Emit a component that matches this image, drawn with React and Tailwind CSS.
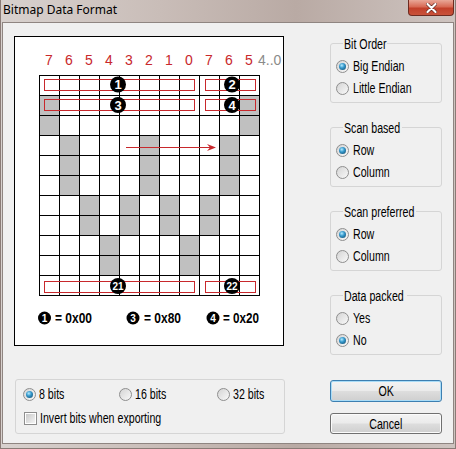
import React from 'react';

const GRAY = [
  [1, 0], [1, 10], [2, 0], [2, 10],
  [3, 1], [3, 5], [3, 9], [4, 1], [4, 5], [4, 9], [5, 1], [5, 5], [5, 9],
  [6, 2], [6, 4], [6, 6], [6, 8], [7, 2], [7, 4], [7, 6], [7, 8],
  [8, 3], [8, 7], [9, 3], [9, 7],
];
const BITS = [7, 6, 5, 4, 3, 2, 1, 0, 7, 6, 5];
const RED = '#c8282c';

// narrow dialog text (the shot uses a condensed ui font)
const Txt = ({ children }) => (
  <span className="inline-block origin-left scale-x-[0.76] whitespace-nowrap text-[14px] leading-[16px] text-black">
    {children}
  </span>
);

const Radio = ({ checked }) => (
  <span className="flex h-[13px] w-[13px] shrink-0 items-center justify-center rounded-full border border-[#8e8e8e] bg-[linear-gradient(135deg,#d4d4d4,#f9f9f9)]">
    {checked && (
      <span className="h-[7px] w-[7px] rounded-full bg-[radial-gradient(circle_at_40%_35%,#b5ecff_0%,#3598cc_40%,#0f4463_100%)]" />
    )}
  </span>
);

const RadioRow = ({ label, checked }) => (
  <div className="flex h-[22px] items-center gap-[4px]">
    <Radio checked={checked} />
    <Txt>{label}</Txt>
  </div>
);

const Group = ({ title, legendW, className, children }) => (
  <fieldset className={'rounded-[3px] border border-[#d5d5d5] pb-[3px] pl-[5px] pt-[5px] ' + className}>
    <legend className={'ml-[7px] h-[14px] px-[1px] leading-[14px] ' + legendW}>
      <Txt>{title}</Txt>
    </legend>
    {children}
  </fieldset>
);

const Circle = ({ cx, cy, r, n, size }) => (
  <g>
    <circle cx={cx} cy={cy} r={r} fill="#000" />
    <text x={cx} y={cy + size * 0.36} textAnchor="middle" fill="#fff" fontWeight="bold" fontSize={size}>
      {n}
    </text>
  </g>
);

function Picture() {
  const lines = [];
  for (let i = 0; i <= 11; i++) {
    lines.push(<line key={'v' + i} x1={24.5 + 20 * i} y1={38} x2={24.5 + 20 * i} y2={259} stroke="#000" />);
    lines.push(<line key={'h' + i} x1={24} y1={38.5 + 20 * i} x2={245} y2={38.5 + 20 * i} stroke="#000" />);
  }
  return (
    <svg width="268" height="308" className="block font-['Liberation_Sans',Arial,sans-serif]">
      {BITS.map((b, i) => (
        <text key={i} x={34 + 20 * i} y={28} textAnchor="middle" fontSize="14" fill={RED}>
          {b}
        </text>
      ))}
      <text x={243} y={28} fontSize="14" fill="#8a8a8a">4..0</text>

      {GRAY.map(([r, c]) => (
        <rect key={r + '-' + c} x={24 + 20 * c} y={38 + 20 * r} width="20" height="20" fill="#c0c0c0" />
      ))}
      <g shapeRendering="crispEdges">{lines}</g>

      <g fill="none" stroke={RED} shapeRendering="crispEdges">
        <rect x="29.5" y="42.5" width="150" height="11" />
        <rect x="190.5" y="42.5" width="50" height="11" />
        <rect x="29.5" y="62.5" width="150" height="11" />
        <rect x="190.5" y="62.5" width="50" height="11" />
        <rect x="29.5" y="244.5" width="150" height="11" />
        <rect x="190.5" y="244.5" width="50" height="11" />
      </g>

      <line x1="111" y1="110.5" x2="198" y2="110.5" stroke={RED} />
      <polygon points="201,110.5 192,107 195,110.5 192,114" fill={RED} />

      <Circle cx={103} cy={47.5} r={8} n="1" size={13} />
      <Circle cx={217} cy={47.5} r={8} n="2" size={13} />
      <Circle cx={103} cy={68} r={8} n="3" size={13} />
      <Circle cx={217} cy={68} r={8} n="4" size={13} />
      <Circle cx={103} cy={249} r={8} n="21" size={10} />
      <Circle cx={217} cy={249} r={8} n="22" size={10} />

      <Circle cx={29.5} cy={281} r={6.5} n="1" size={10} />
      <text x="40" y="286" fontSize="14" fontWeight="bold" textLength="37" lengthAdjust="spacingAndGlyphs">= 0x00</text>
      <Circle cx={118} cy={281} r={6.5} n="3" size={10} />
      <text x="129" y="286" fontSize="14" fontWeight="bold" textLength="37" lengthAdjust="spacingAndGlyphs">= 0x80</text>
      <Circle cx={198} cy={281} r={6.5} n="4" size={10} />
      <text x="208" y="286" fontSize="14" fontWeight="bold" textLength="36" lengthAdjust="spacingAndGlyphs">= 0x20</text>
    </svg>
  );
}

const Button = ({ label, primary, className }) => (
  <div
    className={
      'flex items-center justify-center rounded-[3px] border bg-[linear-gradient(#f3f3f3_0%,#ebebeb_48%,#dddddd_52%,#cfcfcf_100%)] ' +
      (primary ? 'border-[#3c7fb1] shadow-[inset_0_0_0_1px_#a9dcf7] ' : 'border-[#707070] shadow-[inset_0_0_0_1px_#fbfbfb] ') +
      className
    }
  >
    <span className="inline-block origin-center scale-x-[0.76] whitespace-nowrap text-[14px] leading-[16px] text-black">{label}</span>
  </div>
);

export default function App() {
  return (
    <div className="h-[449px] w-[456px] overflow-hidden border-x border-b border-[#8a7b76] bg-[linear-gradient(90deg,#d8d1ce_0%,#c9bdb8_35%,#b9aaa4_65%,#cec4c0_100%)] font-['Liberation_Sans',Arial,sans-serif]">
      <div className="flex h-[22px] items-start">
        <div className="pl-[2px] pt-[2px] font-['Noto_Sans',sans-serif] text-[12px] leading-[16px] text-black">Bitmap Data Format</div>
        <div className="ml-auto mr-[1px] flex h-[16px] w-[46px] items-center justify-center rounded-b-[4px] border border-t-0 border-[#6e2b20] bg-[linear-gradient(#e9a797_0%,#d86a55_45%,#c2402a_55%,#c9523a_100%)]">
          <svg width="11" height="10" viewBox="0 0 11 10">
            <path d="M1.5 1 L9.5 9 M9.5 1 L1.5 9" stroke="#5a2018" strokeWidth="3.4" strokeLinecap="round" />
            <path d="M1.5 1 L9.5 9 M9.5 1 L1.5 9" stroke="#fff" strokeWidth="2.2" strokeLinecap="round" />
          </svg>
        </div>
      </div>

      <div className="ml-[1px] flex h-[422px] w-[452px] border border-[#8f8581] bg-[#f0f0f0] pl-[11px] pt-[13px]">
        <div className="flex w-[271px] flex-col">
          <div className="h-[310px] w-[270px] border border-black bg-white">
            <Picture />
          </div>
          <div className="ml-[1px] mt-[33px] h-[55px] w-[270px] rounded-[3px] border border-[#d5d5d5] pt-[4px]">
            <div className="flex h-[20px] items-center pl-[7px]">
              <div className="flex w-[96px] items-center gap-[3px]">
                <Radio checked />
                <Txt>8 bits</Txt>
              </div>
              <div className="flex w-[98px] items-center gap-[3px]">
                <Radio />
                <Txt>16 bits</Txt>
              </div>
              <div className="flex items-center gap-[3px]">
                <Radio />
                <Txt>32 bits</Txt>
              </div>
            </div>
            <div className="mt-[4px] flex h-[20px] items-center gap-[3px] pl-[8px]">
              <span className="flex h-[13px] w-[13px] items-center justify-center border border-[#8e8e8e] bg-white">
                <span className="h-[9px] w-[9px] bg-[linear-gradient(135deg,#c9c9c9,#f4f4f4)]" />
              </span>
              <Txt>Invert bits when exporting</Txt>
            </div>
          </div>
        </div>

        <div className="ml-[45px] flex w-[112px] flex-col">
          <Group title="Bit Order" legendW="w-[44px]" className="">
            <RadioRow label="Big Endian" checked />
            <RadioRow label="Little Endian" />
          </Group>
          <Group title="Scan based" legendW="w-[59px]" className="mt-[17px]">
            <RadioRow label="Row" checked />
            <RadioRow label="Column" />
          </Group>
          <Group title="Scan preferred" legendW="w-[73px]" className="mt-[17px]">
            <RadioRow label="Row" checked />
            <RadioRow label="Column" />
          </Group>
          <Group title="Data packed" legendW="w-[64px]" className="mt-[17px]">
            <RadioRow label="Yes" />
            <RadioRow label="No" checked />
          </Group>
          <Button label="OK" primary className="mt-[25px] h-[22px]" />
          <Button label="Cancel" className="mt-[11px] h-[21px]" />
        </div>
      </div>
    </div>
  );
}
